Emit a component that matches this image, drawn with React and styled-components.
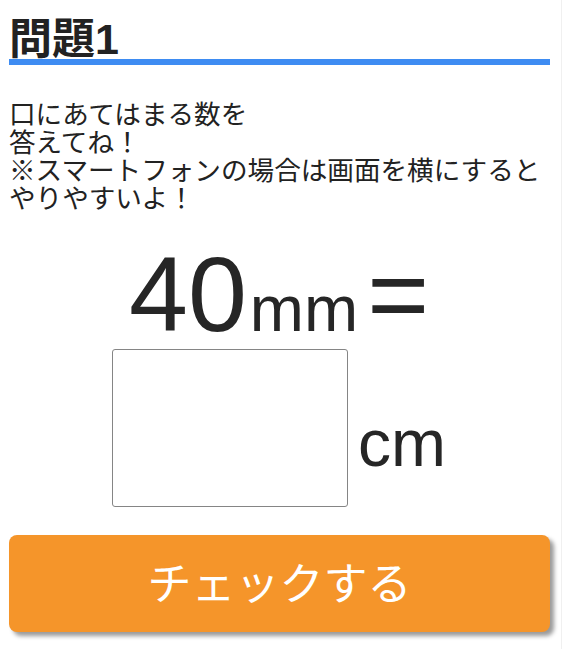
import React from "react";
import styled, { createGlobalStyle } from "styled-components";

const GlobalStyle = createGlobalStyle`
  body {
    margin: 0;
    background: #ffffff;
    font-family: "Liberation Sans", "Noto Sans CJK JP", sans-serif;
    color: #262626;
  }
`;

export default function App() {
  return (
    <>
      <GlobalStyle />
      <Page>
        <QuestionTitle>問題1</QuestionTitle>
        <Lead>
          口にあてはまる数を
          <br />
          答えてね！
          <br />
          ※スマートフォンの場合は画面を横にすると
          <br />
          やりやすいよ！
        </Lead>
        <Equation>
          <BigNum>40</BigNum>
          <Unit>mm</Unit>
          <Equal>=</Equal>
        </Equation>
        <AnswerRow>
          <AnswerBox type="text" aria-label="答え" />
          <AnswerUnit>cm</AnswerUnit>
        </AnswerRow>
        <CheckButton type="button">チェックする</CheckButton>
      </Page>
    </>
  );
}

const Page = styled.div`
  box-sizing: border-box;
  width: 562px;
  min-height: 649px;
  padding: 19px 11px 20px 9px;
  border-right: 1px solid #f0f0f0;
`;

const QuestionTitle = styled.h2`
  margin: 0;
  font-size: 43px;
  font-weight: bold;
  line-height: 40px;
  color: #222222;
  border-bottom: 6px solid #3e8cf2;
`;

const Lead = styled.p`
  margin: 36px 0 0;
  font-size: 26.6px;
  line-height: 28px;
  color: #222222;
`;

const Equation = styled.div`
  margin-top: 28px;
  padding-right: 1px;
  text-align: center;
  font-size: 106px;
  line-height: 1;
  white-space: nowrap;
`;

const BigNum = styled.span``;

const Unit = styled.span`
  margin-left: 3px;
  font-size: 65px;
`;

const Equal = styled.span`
  margin-left: 9px;
`;

const AnswerRow = styled.div`
  display: flex;
  justify-content: center;
  align-items: flex-end;
  margin-top: 2px;
  padding-right: 1px;
`;

const AnswerBox = styled.input`
  box-sizing: border-box;
  width: 236px;
  height: 158px;
  margin: 0;
  padding: 0 8px;
  border: 1px solid #858585;
  border-radius: 3px;
  background: #ffffff;
  font-family: "Liberation Sans", sans-serif;
  font-size: 64px;
  text-align: center;
  outline: none;
`;

const AnswerUnit = styled.span`
  margin: 0 0 31px 10px;
  font-size: 66px;
  line-height: 1;
`;

const CheckButton = styled.button`
  display: flex;
  align-items: center;
  justify-content: center;
  box-sizing: border-box;
  width: 100%;
  height: 97px;
  margin-top: 28px;
  padding: 0 0 6px;
  border: none;
  border-radius: 8px;
  background: #f5952a;
  box-shadow: 4px 4px 4px rgba(0, 0, 0, 0.4);
  color: #ffffff;
  font-family: "Noto Sans CJK JP", sans-serif;
  font-size: 44px;
  cursor: pointer;
`;
